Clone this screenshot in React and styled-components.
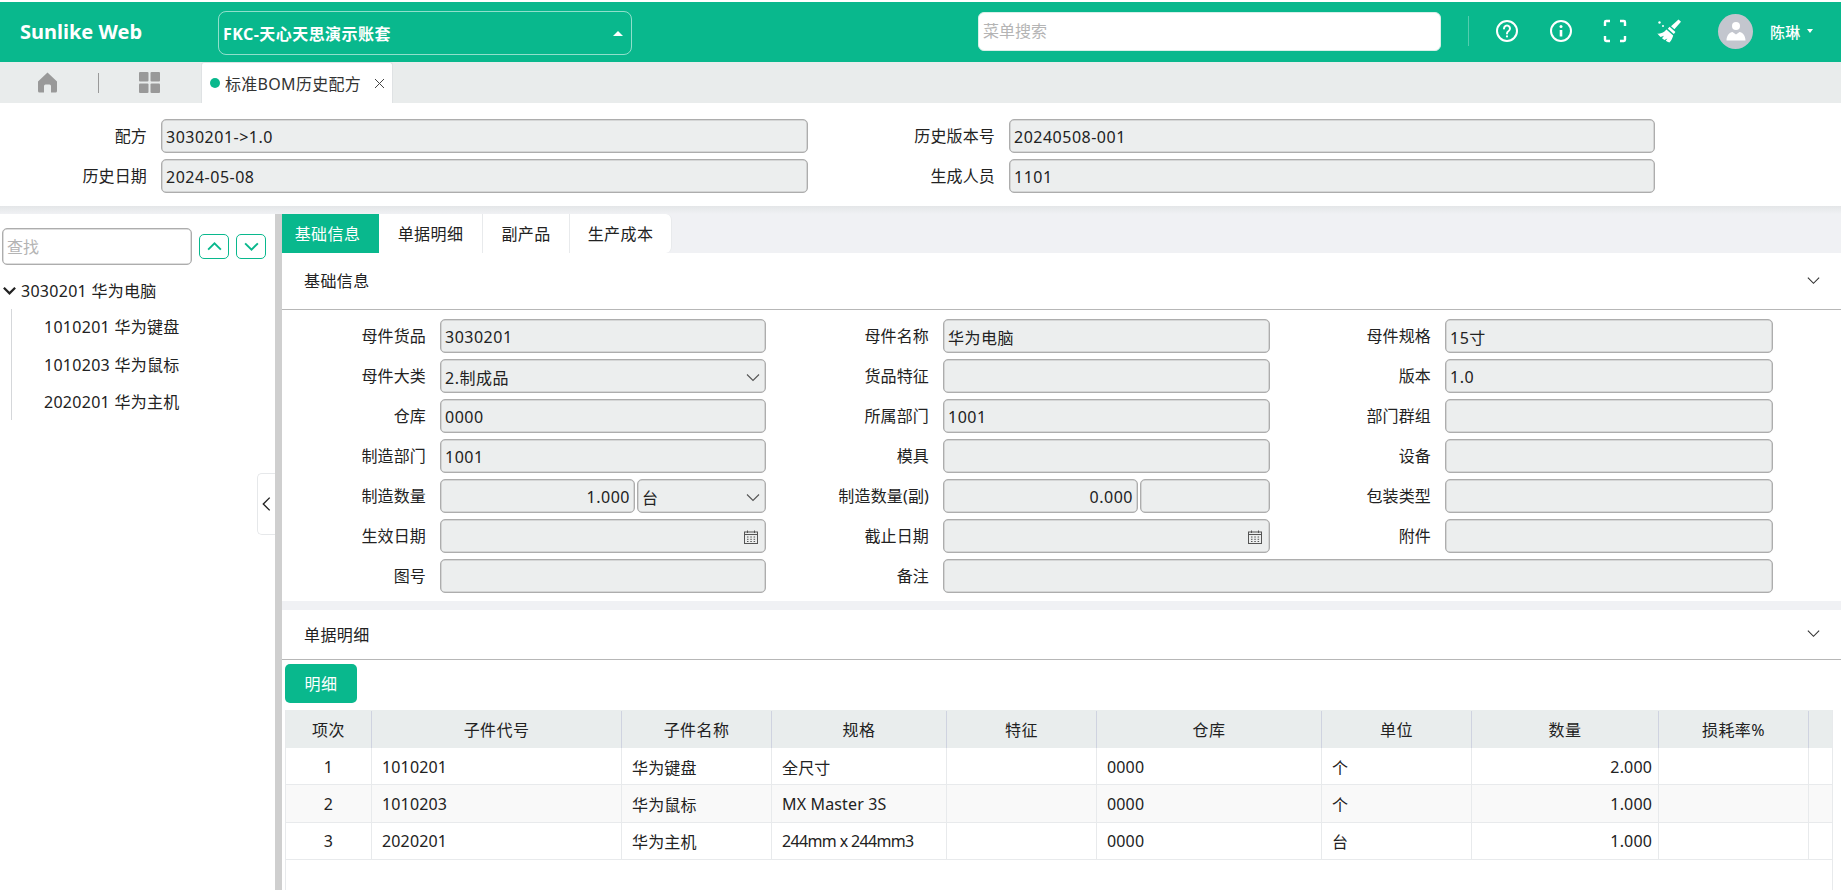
import React from 'react';
import styled, { createGlobalStyle } from 'styled-components';

const GREEN = '#09b88d';
const FONT = '"Noto Sans", "Noto Sans CJK SC", sans-serif';

const Global = createGlobalStyle`
  html, body { margin: 0; padding: 0; background: #fff; }
  body { font-family: ${FONT}; font-size: 16px; color: #222; letter-spacing: 0.15px; }
  * { box-sizing: border-box; }
`;

const Page = styled.div`
  height: 890px;
  overflow: hidden;
  padding-top: 2px;
  display: flex;
  flex-direction: column;
`;

const Header = styled.header`
  height: 60px;
  flex: none;
  background: ${GREEN};
  display: flex;
  align-items: center;
  color: #fff;
`;
const Logo = styled.div`
  width: 218px;
  padding-left: 20px;
  font-size: 20px;
  font-weight: 700;
  letter-spacing: 0;
  font-family: "Noto Sans", sans-serif;
  margin-top: -2px;
`;
const Account = styled.div`
  width: 414px;
  height: 44px;
  margin-top: 2px;
  border: 1px solid rgba(255, 255, 255, 0.55);
  border-radius: 8px;
  display: flex;
  align-items: center;
  justify-content: space-between;
  padding: 0 8px 0 4px;
  font-weight: 700;
  font-size: 16px;
  letter-spacing: 0.45px;
`;
const CaretUp = styled.span`
  width: 0;
  height: 0;
  border-left: 5px solid transparent;
  border-right: 5px solid transparent;
  border-bottom: 5px solid #fff;
`;
const CaretDown = styled.span`
  width: 0;
  height: 0;
  margin-left: 7px;
  border-left: 3.5px solid transparent;
  border-right: 3.5px solid transparent;
  border-top: 4px solid #fff;
`;
const MenuSearch = styled.input`
  width: 463px;
  height: 39px;
  margin-left: 346px;
  margin-top: -2px;
  border: 1px solid #d8efe8;
  border-radius: 6px;
  padding: 0 4px;
  background: #fff;
  font: 16px ${FONT};
  outline: none;
  &::placeholder { color: #b4b4b4; }
`;
const Divider = styled.span`
  width: 1px;
  height: 30px;
  margin-left: 27px;
  margin-top: -2px;
  background: rgba(255, 255, 255, 0.3);
`;
const IconBar = styled.div`
  display: flex;
  align-items: center;
  gap: 30px;
  margin-left: 26px;
  margin-top: -2px;
`;
const HeaderIcon = styled.svg`
  width: 24px;
  height: 24px;
  display: block;
  color: #fff;
`;
const Avatar = styled.div`
  width: 35px;
  height: 35px;
  border-radius: 50%;
  background: #c3c6ce;
  margin-left: 37px;
  margin-top: -2px;
  flex: none;
  display: flex;
  align-items: center;
  justify-content: center;
`;
const UserName = styled.div`
  margin-left: 17px;
  margin-top: -2px;
  font-size: 15px;
  font-weight: 500;
  display: flex;
  align-items: center;
`;

const TabBar = styled.nav`
  height: 41px;
  flex: none;
  background: #e9ecec;
  display: flex;
  align-items: center;
`;
const TabIcon = styled.svg`
  width: 21px;
  height: 21px;
  display: block;
  fill: #999;
`;
const HomeSlot = styled.div`
  width: 98px;
  padding-left: 37px;
`;
const TabSep = styled.span`
  width: 1px;
  height: 20px;
  background: #999;
`;
const GridSlot = styled.div`
  width: 102px;
  padding-left: 40px;
`;
const PageTab = styled.div`
  width: 192px;
  height: 41px;
  background: #fff;
  border: 1px solid #dfe2e4;
  border-bottom: 0;
  border-radius: 3px 3px 0 0;
  display: flex;
  align-items: center;
  padding-left: 8px;
  font-size: 16px;
  letter-spacing: 0.3px;
  white-space: nowrap;
  color: #333;
`;
const Dot = styled.span`
  width: 10px;
  height: 10px;
  border-radius: 50%;
  background: ${GREEN};
  margin-right: 5px;
`;
const CloseX = styled.svg`
  width: 11px;
  height: 11px;
  margin-left: 13px;
  stroke: #444;
  fill: none;
`;

const TopForm = styled.section`
  flex: none;
  height: 103px;
  padding-top: 16px;
  display: grid;
  grid-template-columns: 147px 647px 173px 646px;
  grid-auto-rows: 34px;
  column-gap: 14px;
  row-gap: 6px;
`;
const Label = styled.label`
  text-align: right;
  line-height: 34px;
  font-size: 16px;
  white-space: nowrap;
  color: #222;
`;
const Field = styled.div`
  height: 34px;
  min-width: 0;
  flex: ${p => p.$flex || 'none'};
  grid-column: ${p => p.$span || 'auto'};
  background: #eceeee;
  border: 1px solid #adadad;
  box-shadow: inset 0 0 0 0.5px #bdbdbd;
  border-radius: 5px;
  display: flex;
  align-items: center;
  justify-content: ${p => (p.$right ? 'flex-end' : 'space-between')};
  padding: 1px 4px 0 4px;
  font-size: 16px;
  letter-spacing: 0.5px;
  color: #222;
  white-space: nowrap;
`;
const FieldIcon = styled.svg`
  width: ${p => p.$size || 14}px;
  height: ${p => p.$size || 14}px;
  margin-left: auto;
  margin-right: ${p => p.$mr || 0}px;
  flex: none;
  fill: none;
  stroke: #555;
`;
const FieldPair = styled.div`
  display: flex;
  gap: 2px;
  min-width: 0;
`;

const Gap = styled.div`
  height: 8px;
  flex: none;
  background: linear-gradient(#e4e6e8, #f0f1f4);
`;
const Body = styled.main`
  flex: 1;
  min-height: 0;
  display: flex;
`;
const Side = styled.aside`
  position: relative;
  width: 275px;
  flex: none;
  background: #fff;
  padding-top: 14px;
`;
const SideSearchRow = styled.div`
  display: flex;
  align-items: center;
  padding-left: 2px;
`;
const SideSearch = styled.input`
  width: 190px;
  height: 37px;
  border: 1px solid #adadad;
  box-shadow: inset 0 0 0 0.5px #bdbdbd;
  border-radius: 5px;
  padding: 0 4px;
  font: 16px ${FONT};
  outline: none;
  &::placeholder { color: #b4b4b4; }
`;
const ArrowBtn = styled.button`
  width: 30px;
  height: 25px;
  margin-left: ${p => p.$ml}px;
  padding: 0;
  background: #fff;
  border: 1px solid ${GREEN};
  border-radius: 5px;
  display: flex;
  align-items: center;
  justify-content: center;
`;
const Tree = styled.div`
  padding-top: 6px;
  font-size: 16px;
  letter-spacing: 0.28px;
`;
const TreeRoot = styled.div`
  height: 38px;
  display: flex;
  align-items: center;
  padding-left: 2px;
  gap: 4px;
  white-space: nowrap;
`;
const TreeChildren = styled.div`
  margin-left: 11px;
  border-left: 1px solid #d5d7da;
  padding-left: 32px;
  margin-top: 0;
`;
const TreeItem = styled.div`
  height: 36px;
  line-height: 36px;
  margin-bottom: 1.5px;
  white-space: nowrap;
`;
const CollapseHandle = styled.button`
  position: absolute;
  right: 0;
  top: 259px;
  width: 18px;
  height: 62px;
  padding: 0;
  background: #fff;
  border: 1px solid #e6e8ea;
  border-right: 0;
  border-radius: 5px 0 0 5px;
  display: flex;
  align-items: center;
  justify-content: center;
`;
const Splitter = styled.div`
  width: 7px;
  flex: none;
  background: #cfcfcf;
`;
const Content = styled.div`
  flex: 1;
  min-width: 0;
  background: #f0f1f4;
  display: flex;
  flex-direction: column;
`;
const SectionTabs = styled.div`
  height: 39px;
  flex: none;
  display: flex;
`;
const SectionTab = styled.div`
  width: ${p => p.$w}px;
  background: ${p => (p.$active ? GREEN : '#fff')};
  color: ${p => (p.$active ? '#fff' : '#222')};
  border-right: 1px solid ${p => (p.$active ? GREEN : '#e8eaec')};
  border-radius: ${p => (p.$last ? '0 6px 6px 0' : '0')};
  display: flex;
  align-items: center;
  justify-content: center;
  padding-bottom: 2px;
  padding-right: ${p => (p.$active ? 5 : 0)}px;
  font-size: 16px;
  letter-spacing: 0.4px;
`;
const Collapse = styled.section`
  background: #fff;
  margin-top: ${p => p.$mt}px;
  flex: none;
`;
const CollapseHead = styled.div`
  height: ${p => p.$h}px;
  border-bottom: 1px solid #b7b7b7;
  display: flex;
  align-items: center;
  justify-content: space-between;
  padding: 0 20px 2px 22px;
  font-size: 16px;
  letter-spacing: 0.4px;
`;
const BaseForm = styled.div`
  display: grid;
  grid-template-columns: 144px 326px 149px 327px 147px 328px;
  grid-auto-rows: 34px;
  column-gap: 14px;
  row-gap: 6px;
  padding: 9px 0 8px;
`;
const DetailPanel = styled.section`
  flex: 1;
  background: #fff;
  padding: 4px 8px 0 3px;
  min-height: 0;
`;
const DetailBtn = styled.div`
  width: 72px;
  height: 39px;
  background: ${GREEN};
  border-radius: 5px;
  color: #fff;
  display: flex;
  align-items: center;
  justify-content: center;
  padding-bottom: 1px;
  font-size: 16px;
  letter-spacing: 0.4px;
`;
const Table = styled.div`
  margin-top: 7px;
  height: 400px;
  border-left: 1px solid #e8eaec;
  border-right: 1px solid #e8eaec;
`;
const COLS = '86px 250px 150px 175px 150px 225px 150px 187px 150px 23px';
const HeadRow = styled.div`
  height: 38px;
  background: #e9eded;
  display: grid;
  grid-template-columns: ${COLS};
  padding-top: 1px;
`;
const HeadCell = styled.div`
  border-right: 1px solid #cfd3e0;
  display: flex;
  align-items: center;
  justify-content: center;
  padding-bottom: 2px;
  font-size: 16px;
  letter-spacing: 0.4px;
  &:last-child { border-right: 0; }
`;
const Row = styled.div`
  height: 37.4px;
  display: grid;
  grid-template-columns: ${COLS};
  background: ${p => (p.$alt ? '#f9f9f9' : '#fff')};
  border-bottom: 1.5px solid #e8eaec;
`;
const Cell = styled.div`
  border-right: 1px solid #e8eaec;
  display: flex;
  align-items: center;
  justify-content: ${p => (p.$align === 'center' ? 'center' : p.$align === 'right' ? 'flex-end' : 'flex-start')};
  padding: 1px ${p => (p.$align === 'right' ? 6 : 10)}px 0 10px;
  font-size: 16px;
  letter-spacing: ${p => (p.$tight ? '-0.65px' : '0.15px')};
  white-space: nowrap;
  &:last-child { border-right: 0; }
`;

const Chevron = ({ dir = 'down', size = 14, width = 1.3, color = '#444' }) => {
  const d = { down: 'M2 5l6 6 6-6', up: 'M2 11l6-6 6 6', left: 'M11 2L5 8l6 6' }[dir];
  return (
    <svg width={size} height={size} viewBox="0 0 16 16" fill="none" stroke={color} strokeWidth={width}>
      <path d={d} />
    </svg>
  );
};

const Calendar = () => (
  <FieldIcon $mr={3} viewBox="0 0 14 14" strokeWidth="1">
    <rect x="0.5" y="2" width="13" height="11.5" />
    <path d="M0.5 4.5h13M3.5 0.5v2.5M10.5 0.5v2.5" />
    <path d="M3 7h1.5M6.3 7h1.5M9.6 7h1.5M3 9.3h1.5M6.3 9.3h1.5M9.6 9.3h1.5M3 11.5h1.5M6.3 11.5h1.5M9.6 11.5h1.5" />
  </FieldIcon>
);
const SelectArrow = () => (
  <FieldIcon $size={14} $mr={1} viewBox="0 0 14 14" strokeWidth="1.1">
    <path d="M1 4.5l6 6 6-6" />
  </FieldIcon>
);

const rows = [
  ['1', '1010201', '华为键盘', '全尺寸', '', '0000', '个', '2.000', ''],
  ['2', '1010203', '华为鼠标', 'MX Master 3S', '', '0000', '个', '1.000', ''],
  ['3', '2020201', '华为主机', '244mm x 244mm3', '', '0000', '台', '1.000', ''],
];
const heads = ['项次', '子件代号', '子件名称', '规格', '特征', '仓库', '单位', '数量', '损耗率%', ''];

export default function App() {
  return (
    <Page>
      <Global />
      <Header>
        <Logo>Sunlike Web</Logo>
        <Account>
          <span>FKC-天心天思演示账套</span>
          <CaretUp />
        </Account>
        <MenuSearch placeholder="菜单搜索" />
        <Divider />
        <IconBar>
          <HeaderIcon viewBox="0 0 24 24" fill="none" stroke="currentColor" strokeWidth="2">
            <circle cx="12" cy="12" r="10" />
            <path d="M9 9.4a3 3 0 1 1 4.6 2.6c-1 .6-1.6 1.2-1.6 2.4" strokeLinecap="round" />
            <circle cx="12" cy="17.4" r="1.1" fill="currentColor" stroke="none" />
          </HeaderIcon>
          <HeaderIcon viewBox="0 0 24 24" fill="none" stroke="currentColor" strokeWidth="2">
            <circle cx="12" cy="12" r="10" />
            <path d="M12 11v6.5" strokeWidth="2.6" />
            <circle cx="12" cy="7.5" r="1.5" fill="currentColor" stroke="none" />
          </HeaderIcon>
          <HeaderIcon viewBox="0 0 24 24" fill="none" stroke="currentColor" strokeWidth="2.4">
            <path d="M2 7V3.2q0-1.2 1.2-1.2H7M17 2h3.8q1.200 0 1.2 1.2V7M22 17v3.8q0 1.200-1.2 1.2H17M7 22H3.2Q2 22 2 20.8V17" />
          </HeaderIcon>
          <HeaderIcon viewBox="0 0 24 24" fill="currentColor" stroke="none">
            <path d="M21.500 0.500L24 2.800 17.400 10.200 14 7.200z" />
            <path d="M12.600 7.800L18.400 13 16.800 15 10.800 9.800z" />
            <path d="M9.400 10.600L16.200 16.400C15.600 18.800 14.400 21.400 12.400 23.400 11 23.200 9.800 22.600 8.800 21.800L10.400 19.400 7.400 21 5 19.200 7 16.800 3.600 18C2.400 17 1.200 15.800 .4 14.600 4 15 7.200 13.600 9.400 10.600z" />
            <circle cx="2.500" cy="3.500" r="1.200" />
            <circle cx="6" cy="7" r="1" />
          </HeaderIcon>
        </IconBar>
        <Avatar>
          <svg width="22" height="22" viewBox="0 0 22 22" fill="#fff">
            <circle cx="11" cy="6" r="4" />
            <path d="M1.500 20.500c0-5 3-8 6-8.500l3.500 2.500 3.500-2.500c3 .5 6 3.500 6 8.500z" />
          </svg>
        </Avatar>
        <UserName>
          陈琳
          <CaretDown />
        </UserName>
      </Header>

      <TabBar>
        <HomeSlot>
          <TabIcon viewBox="0 0 21 21">
            <path d="M10.500 0.500L1 9.500V19q0 1.500 1.500 1.500h4.500v-6.500q0-1.500 1.500-1.500h4q1.500 0 1.500 1.500v6.500h4.500Q20 20.500 20 19V9.500z" />
          </TabIcon>
        </HomeSlot>
        <TabSep />
        <GridSlot>
          <TabIcon viewBox="0 0 21 21">
            <rect x="0" y="0" width="9.500" height="9.500" rx="1" />
            <rect x="11.500" y="0" width="9.500" height="9.500" rx="1" />
            <rect x="0" y="11.500" width="9.500" height="9.500" rx="1" />
            <rect x="11.500" y="11.500" width="9.500" height="9.500" rx="1" />
          </TabIcon>
        </GridSlot>
        <PageTab>
          <Dot />
          标准BOM历史配方
          <CloseX viewBox="0 0 11 11">
            <path d="M1 1l9 9M10 1l-9 9" />
          </CloseX>
        </PageTab>
      </TabBar>

      <TopForm>
        <Label>配方</Label>
        <Field>3030201-&gt;1.0</Field>
        <Label>历史版本号</Label>
        <Field>20240508-001</Field>
        <Label>历史日期</Label>
        <Field>2024-05-08</Field>
        <Label>生成人员</Label>
        <Field>1101</Field>
      </TopForm>

      <Gap />

      <Body>
        <Side>
          <SideSearchRow>
            <SideSearch placeholder="查找" />
            <ArrowBtn $ml={7}>
              <Chevron dir="up" size={17} width={1.8} color={GREEN} />
            </ArrowBtn>
            <ArrowBtn $ml={7}>
              <Chevron dir="down" size={17} width={1.8} color={GREEN} />
            </ArrowBtn>
          </SideSearchRow>
          <Tree>
            <TreeRoot>
              <Chevron dir="down" size={15} width={2.4} color="#222" />
              3030201 华为电脑
            </TreeRoot>
            <TreeChildren>
              <TreeItem>1010201 华为键盘</TreeItem>
              <TreeItem>1010203 华为鼠标</TreeItem>
              <TreeItem>2020201 华为主机</TreeItem>
            </TreeChildren>
          </Tree>
          <CollapseHandle>
            <Chevron dir="left" size={28} width={1.3} color="#222" />
          </CollapseHandle>
        </Side>
        <Splitter />
        <Content>
          <SectionTabs>
            <SectionTab $active $w={97}>基础信息</SectionTab>
            <SectionTab $w={104}>单据明细</SectionTab>
            <SectionTab $w={87}>副产品</SectionTab>
            <SectionTab $w={102} $last>生产成本</SectionTab>
          </SectionTabs>

          <Collapse $mt={0}>
            <CollapseHead $h={57}>
              基础信息
              <Chevron dir="down" size={15} width={1.2} color="#333" />
            </CollapseHead>
            <BaseForm>
              <Label>母件货品</Label>
              <Field>3030201</Field>
              <Label>母件名称</Label>
              <Field>华为电脑</Field>
              <Label>母件规格</Label>
              <Field>15寸</Field>

              <Label>母件大类</Label>
              <Field>2.制成品<SelectArrow /></Field>
              <Label>货品特征</Label>
              <Field />
              <Label>版本</Label>
              <Field>1.0</Field>

              <Label>仓库</Label>
              <Field>0000</Field>
              <Label>所属部门</Label>
              <Field>1001</Field>
              <Label>部门群组</Label>
              <Field />

              <Label>制造部门</Label>
              <Field>1001</Field>
              <Label>模具</Label>
              <Field />
              <Label>设备</Label>
              <Field />

              <Label>制造数量</Label>
              <FieldPair>
                <Field $flex="0 0 195px" $right>1.000</Field>
                <Field $flex="1">台<SelectArrow /></Field>
              </FieldPair>
              <Label>制造数量(副)</Label>
              <FieldPair>
                <Field $flex="0 0 195px" $right>0.000</Field>
                <Field $flex="1" />
              </FieldPair>
              <Label>包装类型</Label>
              <Field />

              <Label>生效日期</Label>
              <Field><Calendar /></Field>
              <Label>截止日期</Label>
              <Field><Calendar /></Field>
              <Label>附件</Label>
              <Field />

              <Label>图号</Label>
              <Field />
              <Label>备注</Label>
              <Field $span="span 3" />
            </BaseForm>
          </Collapse>

          <Collapse $mt={9}>
            <CollapseHead $h={50}>
              单据明细
              <Chevron dir="down" size={15} width={1.2} color="#333" />
            </CollapseHead>
          </Collapse>
          <DetailPanel>
            <DetailBtn>明细</DetailBtn>
            <Table>
              <HeadRow>
                {heads.map((h, i) => (
                  <HeadCell key={i}>{h}</HeadCell>
                ))}
              </HeadRow>
              {rows.map((r, i) => (
                <Row key={r[0]} $alt={i === 1}>
                  {r.map((c, j) => (
                    <Cell
                      key={j}
                      $align={j === 0 ? 'center' : j === 7 ? 'right' : 'left'}
                      $tight={c.includes('mm')}
                    >
                      {c}
                    </Cell>
                  ))}
                  <Cell />
                </Row>
              ))}
            </Table>
          </DetailPanel>
        </Content>
      </Body>
    </Page>
  );
}
